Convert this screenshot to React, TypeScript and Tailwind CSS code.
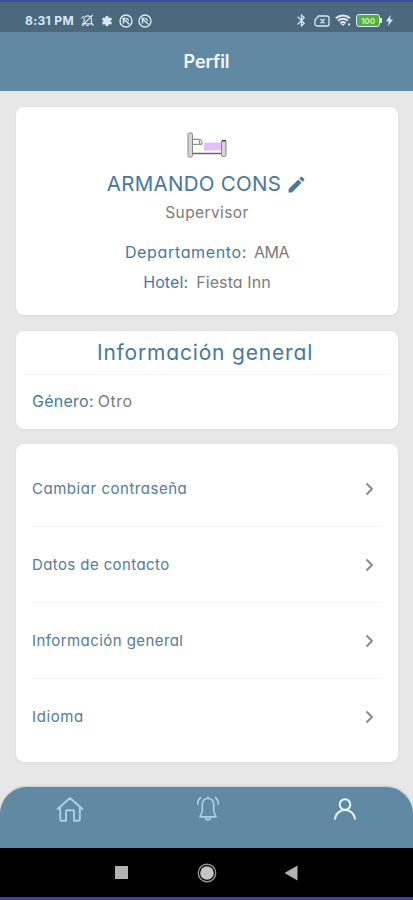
import { MdEdit, MdBluetooth } from "react-icons/md"

const menuItems = [
    { label: "Cambiar contraseña", tracking: "tracking-[0.53px]" },
    { label: "Datos de contacto", tracking: "tracking-[0.4px]" },
    { label: "Información general", tracking: "tracking-[0.43px]" },
    { label: "Idioma", tracking: "tracking-[0.6px]" },
]

const AppBadge = () => (
    <svg width="14" height="14" viewBox="0 0 14 14" fill="none" stroke="currentColor" strokeWidth="1.4">
        <circle cx="7" cy="7" r="6" />
        <path d="M4.500 9.500V7a2.600 2.600 0 0 1 2-3M3.500 4l6.800 6.200" strokeWidth="1.500" />
        <path d="M7 4c2-.2 3 1.200 3 3.500L7 5z" fill="currentColor" stroke="none" />
    </svg>
)

const StatusBar = () => (
    <div className="flex h-[30px] items-center justify-between bg-[#4b687d] pl-[25px] pr-[20px] pt-[7px] text-[#d9e8f2]">
        <div className="flex items-center">
            <span className="w-[49px] whitespace-nowrap text-[12px] font-bold leading-4 tracking-[0.35px]">8:31 PM</span>
            <svg className="ml-[6px]" width="15" height="15" viewBox="0 0 15 15" fill="none" stroke="currentColor" strokeWidth="1.2">
                <path d="M4 10.500V6.500a3.700 3.700 0 0 1 7.400 0v4M2 10.800h11M6.200 12.500h2.600M2 12.800L12.700 2M1.500 5.500L3.500 3M12 11l1.500 1.500" />
            </svg>
            <svg className="ml-[6px]" width="12" height="12" viewBox="0 0 12 12" fill="none" stroke="currentColor" strokeWidth="3.200" strokeLinecap="round">
                <path d="M6 2.300v7.400M2.800 4.150l6.400 3.700M9.200 4.150l-6.400 3.700" />
            </svg>
            <div className="ml-[6px] flex gap-[5px]">
                <AppBadge />
                <AppBadge />
            </div>
        </div>
        <div className="flex items-center">
            <MdBluetooth size={15} />
            <svg className="ml-[5px]" width="16" height="12" viewBox="0 0 16 12" fill="none" stroke="currentColor" strokeWidth="1.3">
                <path d="M4.5 1H13a2 2 0 0 1 2 2v6a2 2 0 0 1-2 2H3a2 2 0 0 1-2-2V5zM6.5 4l4 4.4M10.5 4l-4 4.4" />
            </svg>
            <svg className="ml-[5px]" width="16" height="13" viewBox="0 0 16 13" fill="none" stroke="currentColor" strokeWidth="2">
                <path d="M.8 4.3a10.5 10.5 0 0 1 14.2 0M3 6.8a7 7 0 0 1 9.8 0M5.3 9.2a4 4 0 0 1 5.2 0" />
                <path d="M6 10h4l-2 2z" fill="currentColor" stroke="none" />
                <path d="M13 10.5h2" />
            </svg>
            <div className="ml-[5px] flex h-[13px] w-[24px] items-center justify-center rounded-[3px] border-[1.5px] border-[#d9e8f2] bg-[#52ae42] text-[8px] font-bold leading-none text-[#c9f59a]">100</div>
            <div className="h-[5px] w-[2px] bg-[#d9e8f2]" />
            <svg className="ml-[4px]" width="7" height="11" viewBox="0 0 7 11" fill="currentColor">
                <path d="M4.6 0L0 6.2h2.7L2 11l5-6.6H4.2z" />
            </svg>
        </div>
    </div>
)

// Bed with a folded lilac blanket
const BedIcon = () => (
    <svg className="h-[26px] w-[40px]" viewBox="0 0 40 26" fill="none" stroke="#888" strokeWidth="1">
        <path d="M17 10.500h17v8H17z" fill="#dfc0fb" stroke="none" />
        <path d="M5.500 7.300h7q1.800 0 2.200 2.200l.4 2.600M5.500 12.300H15M12 8l1 4" stroke="#777" />
        <path d="M5 21.500h30" stroke="#666" strokeWidth="1.500" />
        <rect x="1" y="1" width="4.500" height="24" rx="1.400" fill="#d6d6d6" />
        <rect x="34.500" y="8.500" width="4.500" height="16" rx="1.400" fill="#d6d6d6" />
        <path d="M35 8.700h4" stroke="#444" strokeWidth="1.500" />
    </svg>
)

const ProfileCard = () => (
    <div className="flex h-[208px] flex-col items-center rounded-lg bg-white pt-[25px] shadow-[0_1px_3px_rgba(0,0,0,0.06)]">
        <BedIcon />
        <div className="mt-[11px] flex h-[30px] items-center gap-[5px] text-[#48789a]">
            <span className="whitespace-nowrap text-[20.5px] tracking-[0.3px]">ARMANDO CONS</span>
            <MdEdit size={21} />
        </div>
        <div className="mt-px flex h-[26px] items-center text-[15.5px] tracking-[0.4px] text-[#7b7b7b]">Supervisor</div>
        <div className="mt-[11px] flex h-[30px] items-center gap-[7px] text-[16px]">
            <span className="tracking-[0.65px] text-[#48789a]">Departamento:</span>
            <span className="tracking-[-0.5px] text-[#7b7b7b]">AMA</span>
        </div>
        <div className="flex h-[30px] items-center gap-2 text-[16px] tracking-[0.1px]">
            <span className="text-[#48789a]">Hotel:</span>
            <span className="text-[#7b7b7b]">Fiesta Inn</span>
        </div>
    </div>
)

const InfoCard = () => (
    <div className="h-[98px] rounded-lg bg-white px-2 shadow-[0_1px_3px_rgba(0,0,0,0.06)]">
        <div className="flex h-[44px] items-center justify-center border-b border-[#f5f5f5] pr-[4px] text-[21px] tracking-[0.82px] text-[#48789a]">
            Información general
        </div>
        <div className="flex h-[52px] items-center gap-[4px] pl-2 text-[16px]">
            <span className="tracking-[0.25px] text-[#48789a]">Género:</span>
            <span className="tracking-[0.5px] text-[#7b7b7b]">Otro</span>
        </div>
    </div>
)

const MenuCard = () => (
    <div className="h-[318px] rounded-lg bg-white px-4 pt-[7px] shadow-[0_1px_3px_rgba(0,0,0,0.06)]">
        {
            menuItems.map((item) => <div key={item.label} className="flex h-[76px] items-center justify-between border-b border-[#f5f5f5] text-[#557b96] last:border-transparent">
                <span className={`whitespace-nowrap pt-[2px] text-[15px] ${item.tracking}`}>{item.label}</span>
                <svg className="mr-[8px]" width="9" height="14" viewBox="0 0 9 14" fill="none" stroke="#858585" strokeWidth="1.8">
                    <path d="M1.5 1.5L7 7l-5.5 5.5" />
                </svg>
            </div>)
        }
    </div>
)

const TabBar = () => (
    <div className="grid h-[61px] grid-cols-3 rounded-t-[27px] bg-[#6289a4] pt-[8px] text-[#a9d0ea] shadow-[0_-1px_2px_rgba(0,0,0,0.15)]">
        <svg className="ml-[56px]" width="28" height="28" viewBox="0 0 28 28" fill="none" stroke="currentColor" strokeWidth="1.9" strokeLinejoin="round" strokeLinecap="round">
            <path d="M1.700 14L14 3l12.300 11M4.200 12.500v12q0 1.200 1.200 1.200H10v-9.500q0-1 1-1h6q1 0 1 1v9.500h4.600q1.200 0 1.200-1.200v-12" />
        </svg>
        <svg className="ml-[57px]" width="26" height="28" viewBox="0 0 26 28" fill="none" stroke="currentColor" strokeWidth="1.700" strokeLinejoin="round" strokeLinecap="round">
            <path d="M13 3.500c-4 0-5.700 3-5.700 6.500v6.500L5 21.800h16l-2.300-5.300V10c0-3.500-1.700-6.500-5.700-6.500zM13 2v1.500M10.700 22c0 4 4.600 4 4.600 0M5.500 2.700C3.700 4.200 2.800 6.200 2.800 9M20.500 2.700c1.800 1.500 2.700 3.500 2.700 6.300" />
        </svg>
        <svg className="ml-[58px] mt-[2px] text-[#e9f7ff]" width="24" height="24" viewBox="0 0 24 24" fill="none" stroke="currentColor" strokeWidth="2">
            <circle cx="12" cy="7.500" r="5.300" />
            <path d="M1.800 22.500c.5-5.500 4.500-9.500 10.200-9.500s9.700 4 10.200 9.500" />
        </svg>
    </div>
)

const AndroidNav = () => (
    <div className="flex h-[49px] items-center justify-center bg-black">
        <div className="h-[13px] w-[13px] bg-[#b2b2b2]" />
        <svg className="ml-[69px]" width="20" height="20" viewBox="0 0 20 20">
            <circle cx="10" cy="10" r="8.700" fill="none" stroke="#969696" strokeWidth="1.400" />
            <circle cx="10" cy="10" r="6.800" fill="#c4c4c4" />
        </svg>
        <svg className="ml-[67px]" width="14" height="16" viewBox="0 0 14 16">
            <path d="M13.500.5v15L.5 8z" fill="#b2b2b2" />
        </svg>
    </div>
)

const App = () => {
    return <div className="flex h-[900px] w-full flex-col border-b-[3px] border-t-2 border-b-[#3b44a6] border-t-[#3f4da6] bg-[#e7e7e7] font-['Inter','Open_Sans',sans-serif] [font-feature-settings:'cv11'_1]">
        <StatusBar />
        <div className="flex h-[59px] items-center justify-center bg-[#6289a4] text-[18px] font-semibold text-[#f4f9fc]">Perfil</div>
        <div className="flex flex-1 flex-col pl-4 pr-[15px] pt-4">
            <ProfileCard />
            <div className="h-4" />
            <InfoCard />
            <div className="h-[15px]" />
            <MenuCard />
        </div>
        <TabBar />
        <AndroidNav />
    </div>
}

export default App
